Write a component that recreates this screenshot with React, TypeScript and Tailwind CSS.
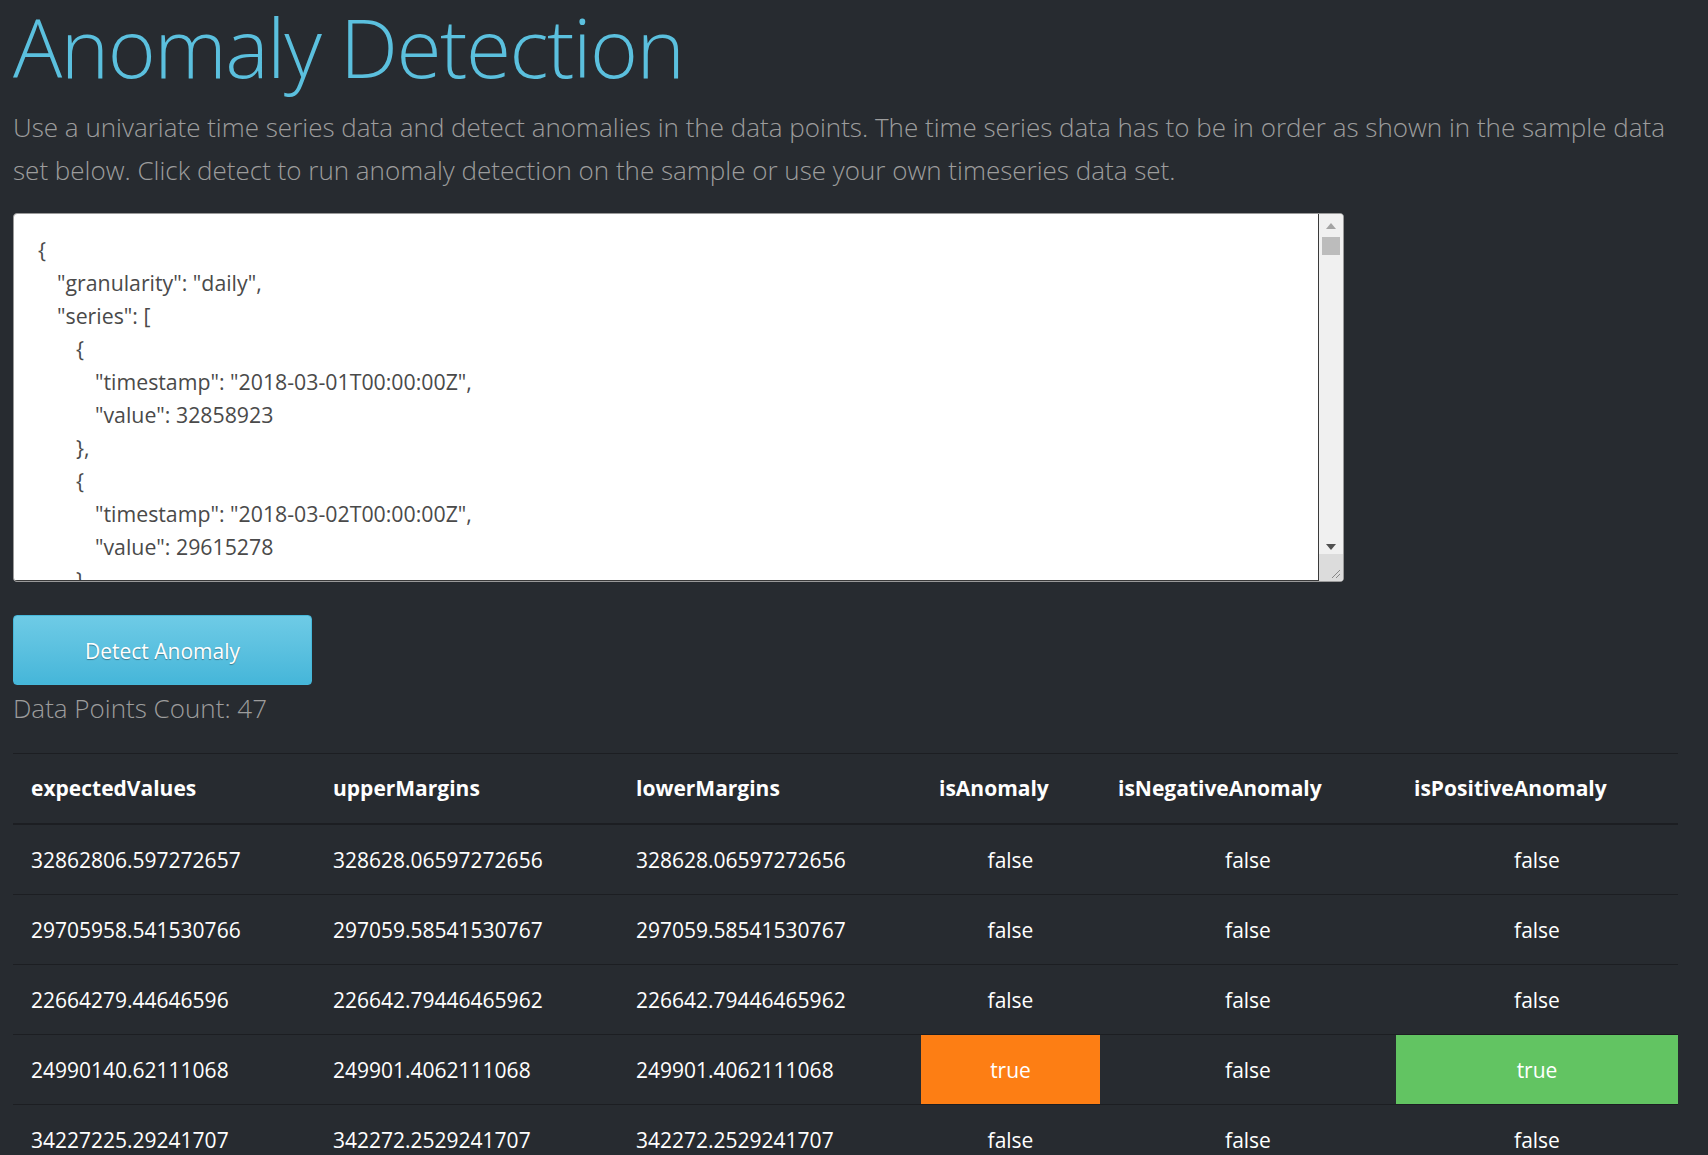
import React from "react";

const jsonLines: [number, string][] = [
  [0, "{"],
  [1, '"granularity": "daily",'],
  [1, '"series": ['],
  [2, "{"],
  [3, '"timestamp": "2018-03-01T00:00:00Z",'],
  [3, '"value": 32858923'],
  [2, "},"],
  [2, "{"],
  [3, '"timestamp": "2018-03-02T00:00:00Z",'],
  [3, '"value": 29615278'],
  [2, "},"],
  [2, "{"],
  [3, '"timestamp": "2018-03-03T00:00:00Z",'],
  [3, '"value": 22839355'],
  [2, "},"],
];

const indent = ["pl-0", "pl-[19px]", "pl-[38px]", "pl-[57px]"];

type Row = {
  expected: string;
  upper: string;
  lower: string;
  anomaly: boolean;
  negative: boolean;
  positive: boolean;
};

const rows: Row[] = [
  { expected: "32862806.597272657", upper: "328628.06597272656", lower: "328628.06597272656", anomaly: false, negative: false, positive: false },
  { expected: "29705958.541530766", upper: "297059.58541530767", lower: "297059.58541530767", anomaly: false, negative: false, positive: false },
  { expected: "22664279.44646596", upper: "226642.79446465962", lower: "226642.79446465962", anomaly: false, negative: false, positive: false },
  { expected: "24990140.62111068", upper: "249901.4062111068", lower: "249901.4062111068", anomaly: true, negative: false, positive: true },
  { expected: "34227225.29241707", upper: "342272.2529241707", lower: "342272.2529241707", anomaly: false, negative: false, positive: false },
  { expected: "33196560.26470593", upper: "331965.6026470593", lower: "331965.6026470593", anomaly: false, negative: false, positive: false },
];

const cols = "grid grid-cols-[302px_303px_303px_179px_296px_282px]";

function Scrollbar() {
  return (
    <div className="flex w-[25px] flex-col border-l border-[#3a3a3a] bg-[#f0f0f0]">
      <div className="flex h-[23px] items-center justify-center">
        <div className="h-0 w-0 border-x-[5px] border-b-[6px] border-x-transparent border-b-[#a3a3a3]" />
      </div>
      <div className="flex-1 px-[3px]">
        <div className="h-[18px] w-full bg-[#bcbcbc]" />
      </div>
      <div className="flex h-[15px] items-center justify-center">
        <div className="h-0 w-0 border-x-[5px] border-t-[6px] border-x-transparent border-t-[#505050]" />
      </div>
      <div className="flex h-[27px] items-end justify-end bg-[#dcdcdc] p-[2px]">
        <svg width="12" height="12" viewBox="0 0 12 12">
          <path d="M11 3 L3 11 M11 7 L7 11" stroke="#888" strokeWidth="1" />
        </svg>
      </div>
    </div>
  );
}

export default function App() {
  return (
    <div className="min-h-screen bg-[#272b30] px-[13px] font-['Open_Sans',sans-serif]">
      <h1 className="text-[82px] font-light leading-[92px] tracking-[-1.5px] text-[#5bc0de]">
        Anomaly Detection
      </h1>
      <p className="mt-[14px] text-[26px] font-light leading-[42.5px] text-[#9d9d9d]">
        <span className="block whitespace-nowrap">
          Use a univariate time series data and detect anomalies in the data points. The time series data has to be in order as shown in the sample data
        </span>
        <span className="block whitespace-nowrap">
          set below. Click detect to run anomaly detection on the sample or use your own timeseries data set.
        </span>
      </p>

      <div className="mt-[22px] flex h-[369px] w-[1331px] overflow-hidden rounded-[4px] border border-[#9a9a9a] bg-white">
        <div className="flex-1 overflow-hidden border-b border-[#3a3a3a] pl-[24px] pt-[19px] text-[21.3px] leading-[33px] text-[#4a4a4a]">
          {jsonLines.map(([lvl, text], i) => (
            <div key={i} className={"whitespace-pre " + indent[lvl]}>
              {text}
            </div>
          ))}
        </div>
        <Scrollbar />
      </div>

      <button className="mt-[33px] flex h-[70px] w-[299px] items-center justify-center rounded-[4px] border border-[#46b8da] bg-gradient-to-b from-[#6ecbe6] to-[#45b6d9] pt-[3px] text-[21px] text-white [text-shadow:0_1px_1px_rgba(0,0,0,0.35)]">
        Detect Anomaly
      </button>
      <div className="mt-[2px] text-[26px] font-light leading-[42px] text-[#9d9d9d]">
        Data Points Count: 47
      </div>

      <div className="mt-[24px] w-[1665px] border-t border-[#1c1e22] text-white">
        <div className={cols + " h-[71px] items-center border-b-2 border-[#1c1e22] pt-[1px] text-[21px] font-bold"}>
          <div className="pl-[18px]">expectedValues</div>
          <div className="pl-[18px]">upperMargins</div>
          <div className="pl-[18px]">lowerMargins</div>
          <div className="pl-[18px]">isAnomaly</div>
          <div className="pl-[18px]">isNegativeAnomaly</div>
          <div className="pl-[18px]">isPositiveAnomaly</div>
        </div>
        {rows.map((r, i) => (
          <div key={i} className={cols + " h-[70px] border-b border-[#1c1e22] text-[21px]"}>
            <div className="flex items-center pl-[18px] pt-[2px]">{r.expected}</div>
            <div className="flex items-center pl-[18px] pt-[2px]">{r.upper}</div>
            <div className="flex items-center pl-[18px] pt-[2px]">{r.lower}</div>
            <div className={"flex items-center justify-center pt-[2px] " + (r.anomaly ? "bg-[#fd7e14]" : "")}>
              {String(r.anomaly)}
            </div>
            <div className={"flex items-center justify-center pt-[2px] " + (r.negative ? "bg-[#fd7e14]" : "")}>
              {String(r.negative)}
            </div>
            <div className={"flex items-center justify-center pt-[2px] " + (r.positive ? "bg-[#62c462]" : "")}>
              {String(r.positive)}
            </div>
          </div>
        ))}
      </div>
    </div>
  );
}
